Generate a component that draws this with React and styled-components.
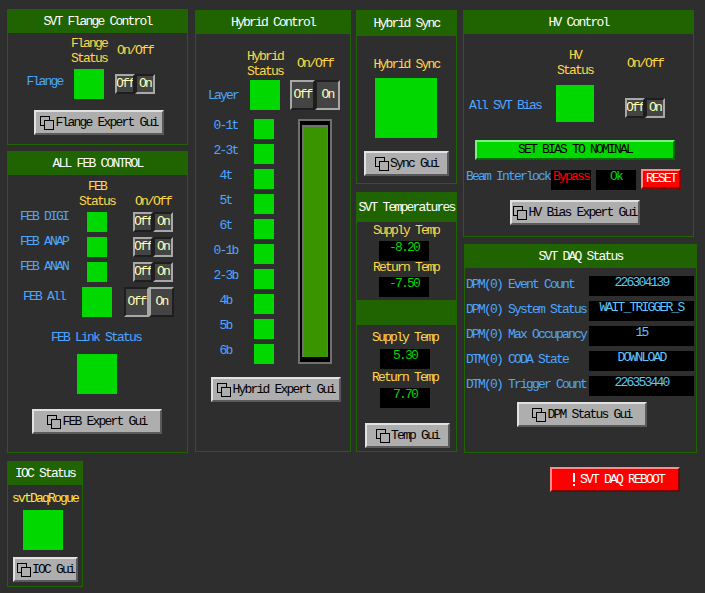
import styled, { createGlobalStyle } from "styled-components"

const GlobalStyle = createGlobalStyle`
    html, body {
        margin: 0;
        background-color: #2e2e2e;
    }
    body {
        font-family: "Liberation Mono", "DejaVu Sans Mono", monospace;
        font-size: 13px;
        letter-spacing: -1.8px;
        line-height: 14px;
    }
`

const Page = styled.div`
    width: 705px;
    height: 593px;
    overflow: hidden;
    padding: 9px 0 0 7px;
    box-sizing: border-box;
`
const TopRow = styled.div`
    display: flex;
    align-items: flex-start;
`
const Column = styled.div`
    display: flex;
    flex-direction: column;
    flex: none;
    width: ${props => props.$w}px;
    margin-left: ${props => props.$ml || 0}px;
    margin-top: ${props => props.$mt || 0}px;
    gap: ${props => props.$gap || 0}px;
`
const BottomRow = styled.div`
    display: flex;
    align-items: flex-start;
    margin-top: 8px;
`
const Box = styled.section`
    border: 1px solid #1f6400;
    box-sizing: border-box;
    height: ${props => props.$h}px;
    width: ${props => (props.$w ? props.$w + "px" : "auto")};
    margin-left: ${props => props.$ml || 0}px;
    display: flex;
    flex-direction: column;
`
const Header = styled.h2`
    margin: 0;
    background-color: #1f6400;
    color: #fff;
    font-size: 13px;
    font-weight: normal;
    text-align: center;
    white-space: nowrap;
    height: ${props => props.$h || 23}px;
    line-height: ${props => (props.$h || 23) + 1}px;
    flex: none;
`
const Body = styled.div`
    display: flex;
    flex-direction: column;
    align-items: flex-start;
    padding-top: ${props => props.$pt || 0}px;
`
const ControlGrid = styled.div`
    display: grid;
    grid-template-columns: ${props => props.$cols};
    row-gap: ${props => props.$rowGap || 0}px;
    margin-top: ${props => props.$mt || 0}px;
    justify-items: center;
    align-items: center;
`
const Caption = styled.div`
    color: ${props => props.$color || "#ffd845"};
    white-space: pre-line;
    text-align: center;
    line-height: 15px;
    align-self: ${props => props.$align || "center"};
    margin-top: ${props => props.$mt || 0}px;
    margin-bottom: ${props => props.$mb || 0}px;
    margin-left: ${props => props.$ml || 0}px;
`
// $up moves the label off the centre line of its row, the row height stays the same
const Label = styled.div`
    color: #4da6ff;
    white-space: nowrap;
    width: ${props => (props.$w ? props.$w + "px" : "auto")};
    margin-top: ${props => (props.$down || 0) - (props.$up || 0)}px;
    margin-left: ${props => props.$ml || 0}px;
    margin-right: ${props => props.$mr || 0}px;
`
const Led = styled.div`
    background-color: #00d800;
    width: ${props => props.$size}px;
    height: ${props => props.$h || props.$size}px;
    margin-top: ${props => props.$mt || 0}px;
    margin-left: ${props => props.$ml || 0}px;
    flex: none;
`
const Toggle = styled.div`
    display: flex;
    justify-self: ${props => props.$justify || "center"};
    margin-right: ${props => props.$mr || 0}px;
    margin-top: ${props => props.$mt || 0}px;
`
const ToggleSide = styled.div`
    width: ${props => props.$w}px;
    height: ${props => props.$h}px;
    box-sizing: border-box;
    background-color: #444;
    color: #ffffb4;
    border: 2px solid;
    border-color: ${props => (props.$raised ? "#a8a8a8 #1e1e1e #1e1e1e #a8a8a8" : "#1e1e1e #a8a8a8 #a8a8a8 #1e1e1e")};
    display: flex;
    align-items: center;
    justify-content: center;
    overflow: hidden;
    white-space: nowrap;
`
const Button = styled.div`
    width: ${props => props.$w || 130}px;
    height: 25px;
    box-sizing: border-box;
    margin-top: ${props => props.$mt || 0}px;
    margin-left: ${props => props.$ml || 0}px;
    background-color: #aeaeae;
    color: #000;
    border: 2px solid;
    border-color: #e2e2e2 #5a5a5a #5a5a5a #e2e2e2;
    display: flex;
    align-items: center;
    justify-content: center;
    gap: 1px;
    white-space: nowrap;
    flex: none;
`
const NominalButton = styled(Button)`
    background-color: #00d800;
    border-color: #7cf07c #006c00 #006c00 #7cf07c;
    height: 20px;
`
const ResetButton = styled.div`
    width: 40px;
    height: 20px;
    box-sizing: border-box;
    background-color: #ff0000;
    color: #fff;
    border: 2px solid;
    border-color: #ff8a8a #800000 #800000 #ff8a8a;
    display: flex;
    align-items: center;
    justify-content: center;
    margin-left: 5px;
    margin-top: -1px;
`
const RebootButton = styled(Button)`
    background-color: #ff0000;
    color: #fff;
    border-color: #ff8a8a #800000 #800000 #ff8a8a;
    gap: 4px;
    padding-left: 6px;
    margin: 6px 0 0 467px;
`
const Readout = styled.div`
    background-color: #000;
    color: ${props => props.$color};
    width: ${props => props.$w}px;
    height: 20px;
    line-height: 14px;
    text-align: center;
    white-space: nowrap;
    margin-top: ${props => props.$mt || 0}px;
    margin-left: ${props => props.$ml || 0}px;
    flex: none;
    overflow: hidden;
`
const TempBlock = styled.div`
    display: flex;
    flex-direction: column;
    align-items: center;
    width: 100%;
    padding-right: ${props => props.$pr || 0}px;
    box-sizing: border-box;
`
const Divider = styled.div`
    background-color: #1f6400;
    height: 25px;
    width: 100%;
    margin-top: 3px;
    flex: none;
`
const HybridSection = styled.div`
    display: flex;
    align-items: flex-start;
    gap: 24px;
    margin: 9px 0 0 1px;
`
const HybridRows = styled.div`
    display: grid;
    grid-template-columns: 57px 20px;
    grid-auto-rows: 20px;
    row-gap: 5px;
    justify-items: center;
    align-items: center;
`
const BarOuter = styled.div`
    width: 34px;
    height: 245px;
    box-sizing: border-box;
    border: 2px solid #707070;
    background-color: #000;
    padding: 4px 2px 5px;
    display: flex;
`
const BarFill = styled.div`
    flex: 1;
    background-color: #3a9400;
    border-style: solid;
    border-color: #707070;
    border-width: 2px 1px 0 2px;
`
const InterlockRow = styled.div`
    display: flex;
    align-items: flex-start;
    margin: 10px 0 0 2px;
`
const DaqRow = styled.div`
    display: grid;
    grid-template-columns: 123px 105px;
    margin: ${props => props.$mt || 0}px 0 0 1px;
`

function WindowIcon() {
    return (
        <svg width="14" height="14" viewBox="0 0 14 14">
            <rect x="0.5" y="0.5" width="9" height="9" fill="none" stroke="#000" />
            <rect x="4.5" y="4.5" width="9" height="9" fill="#aeaeae" stroke="#000" />
        </svg>
    )
}

function AlertIcon() {
    return (
        <svg width="4" height="14" viewBox="0 0 4 14">
            <rect x="1" y="0" width="2" height="9" fill="#fff" />
            <rect x="1" y="11" width="2" height="2" fill="#fff" />
        </svg>
    )
}

function GuiButton(props) {
    return (
        <Button $w={props.w} $mt={props.mt} $ml={props.ml}>
            <WindowIcon />
            {props.children}
        </Button>
    )
}

function OnOff(props) {
    const w = props.w || 20
    const h = props.h || 20
    return (
        <Toggle $justify={props.justify} $mr={props.mr} $mt={props.mt}>
            <ToggleSide $w={w} $h={h} $raised={!props.invert}>Off</ToggleSide>
            <ToggleSide $w={w} $h={h} $raised={props.invert}>On</ToggleSide>
        </Toggle>
    )
}

const febRows = ["FEB DIGI", "FEB ANAP", "FEB ANAN"]
const hybridRows = ["0-1t", "2-3t", "4t", "5t", "6t", "0-1b", "2-3b", "4b", "5b", "6b"]
const daqRows = [
    ["DPM(0) Event Count", "226304139"],
    ["DPM(0) System Status", "WAIT_TRIGGER_S"],
    ["DPM(0) Max Occupancy", "15"],
    ["DTM(0) CODA State", "DOWNLOAD"],
    ["DTM(0) Trigger Count", "226353440"],
]

function FebRow(props) {
    return (
        <>
            <Label $up={10}>{props.name}</Label>
            <Led $size={20} />
            <OnOff justify="end" mr={1} />
        </>
    )
}

function HybridRow(props) {
    return (
        <>
            <Label $up={7}>{props.name}</Label>
            <Led $size={20} />
        </>
    )
}

export default function App() {
    return (
        <Page>
            <GlobalStyle />
            <TopRow>
                <Column $w={181} $gap={6}>
                    <Box $h={136}>
                        <Header>SVT Flange Control</Header>
                        <Body $pt={3}>
                            <ControlGrid $cols="66px 30px 11px 40px" $rowGap={3}>
                                <span />
                                <Caption>{"Flange\nStatus"}</Caption>
                                <span />
                                <Caption $mb={2}>On/Off</Caption>
                                <Label $up={4} $ml={7}>Flange</Label>
                                <Led $size={30} />
                                <span />
                                <OnOff />
                            </ControlGrid>
                            <GuiButton ml={26} mt={11}>Flange Expert Gui</GuiButton>
                        </Body>
                    </Box>
                    <Box $h={302}>
                        <Header>ALL FEB CONTROL</Header>
                        <Body $pt={4}>
                            <ControlGrid $cols="72px 34px 60px">
                                <span />
                                <Caption>{"FEB\nStatus"}</Caption>
                                <Caption $align="end" $ml={18}>On/Off</Caption>
                            </ControlGrid>
                            <ControlGrid $cols="72px 34px 60px" $rowGap={5} $mt={3}>
                                {febRows.map(name => (
                                    <FebRow key={name} name={name} />
                                ))}
                                <Label $up={10}>FEB All</Label>
                                <Led $size={30} />
                                <OnOff w={25} h={30} justify="end" invert />
                            </ControlGrid>
                            <Caption $align="flex-start" $mt={13} $ml={43} $color="#4da6ff">FEB Link Status</Caption>
                            <Led $size={40} $mt={9} $ml={69} />
                            <GuiButton ml={24} mt={15}>FEB Expert Gui</GuiButton>
                        </Body>
                    </Box>
                </Column>
                <Column $w={156} $ml={7} $mt={1}>
                    <Box $h={442}>
                        <Header>Hybrid Control</Header>
                        <Body $pt={15}>
                            <ControlGrid $cols="54px 30px 10px 50px" $rowGap={1}>
                                <span />
                                <Caption>{"Hybrid\nStatus"}</Caption>
                                <span />
                                <Caption $mb={2}>On/Off</Caption>
                                <Label $down={2}>Layer</Label>
                                <Led $size={30} />
                                <span />
                                <OnOff w={25} h={30} />
                            </ControlGrid>
                            <HybridSection>
                                <HybridRows>
                                    {hybridRows.map(name => (
                                        <HybridRow key={name} name={name} />
                                    ))}
                                </HybridRows>
                                <BarOuter>
                                    <BarFill />
                                </BarOuter>
                            </HybridSection>
                            <GuiButton ml={15} mt={13}>Hybrid Expert Gui</GuiButton>
                        </Body>
                    </Box>
                </Column>
                <Column $w={101} $ml={5} $mt={1} $gap={8}>
                    <Box $h={174}>
                        <Header $h={25}>Hybrid Sync</Header>
                        <Body $pt={21}>
                            <Caption>Hybrid Sync</Caption>
                            <Led $size={62} $h={60} $mt={6} $ml={18} />
                            <GuiButton w={85} ml={7} mt={13}>Sync Gui</GuiButton>
                        </Body>
                    </Box>
                    <Box $h={260}>
                        <Header $h={29}>SVT Temperatures</Header>
                        <TempBlock $pr={5}>
                            <Caption $mt={1} $ml={4}>Supply Temp</Caption>
                            <Readout $w={50} $color="#00d800" $mt={3}>-8.20</Readout>
                            <Caption $mt={-1} $ml={4}>Return Temp</Caption>
                            <Readout $w={50} $color="#00d800" $mt={2}>-7.50</Readout>
                        </TempBlock>
                        <Divider />
                        <TempBlock $pr={3}>
                            <Caption $mt={5}>Supply Temp</Caption>
                            <Readout $w={50} $color="#00d800" $mt={4}>5.30</Readout>
                            <Caption $mt={1}>Return Temp</Caption>
                            <Readout $w={50} $color="#00d800" $mt={3}>7.70</Readout>
                        </TempBlock>
                        <Body>
                            <GuiButton w={85} ml={8} mt={15}>Temp Gui</GuiButton>
                        </Body>
                    </Box>
                </Column>
                <Column $w={234} $ml={6} $mt={1} $gap={7}>
                    <Box $h={227} $w={231}>
                        <Header>HV Control</Header>
                        <Body $pt={14}>
                            <ControlGrid $cols="92px 38px 31px 40px">
                                <span />
                                <Caption>{"HV\nStatus"}</Caption>
                                <span />
                                <Caption>On/Off</Caption>
                                <Label $down={12} $mr={10}>All SVT Bias</Label>
                                <Led $size={38} $h={37} $mt={7} />
                                <span />
                                <OnOff mt={16} />
                            </ControlGrid>
                            <NominalButton $w={200} $ml={11} $mt={18}>SET BIAS TO NOMINAL</NominalButton>
                            <InterlockRow>
                                <Label $w={85}>Beam Interlock</Label>
                                <Readout $w={40} $color="#ff0000">Bypass</Readout>
                                <Readout $w={40} $color="#00d800" $ml={5}>Ok</Readout>
                                <ResetButton>RESET</ResetButton>
                            </InterlockRow>
                            <GuiButton ml={46} mt={10}>HV Bias Expert Gui</GuiButton>
                        </Body>
                    </Box>
                    <Box $h={209} $w={233} $ml={1}>
                        <Header>SVT DAQ Status</Header>
                        <Body $pt={8}>
                            {daqRows.map((row, i) => (
                                <DaqRow key={row[0]} $mt={i === 0 ? 0 : 5}>
                                    <Label $down={2}>{row[0]}</Label>
                                    <Readout $w={105} $color="#5fc6ff">{row[1]}</Readout>
                                </DaqRow>
                            ))}
                            <GuiButton ml={52} mt={6}>DPM Status Gui</GuiButton>
                        </Body>
                    </Box>
                </Column>
            </TopRow>
            <BottomRow>
                <Box $h={126} $w={76}>
                    <Header>IOC Status</Header>
                    <Body $pt={6}>
                        <Caption $color="#ffe93f">svtDaqRogue</Caption>
                        <Led $size={40} $mt={4} $ml={15} />
                        <GuiButton w={65} ml={5} mt={7}>IOC Gui</GuiButton>
                    </Body>
                </Box>
                <RebootButton>
                    <AlertIcon />
                    SVT DAQ REBOOT
                </RebootButton>
            </BottomRow>
        </Page>
    )
}
